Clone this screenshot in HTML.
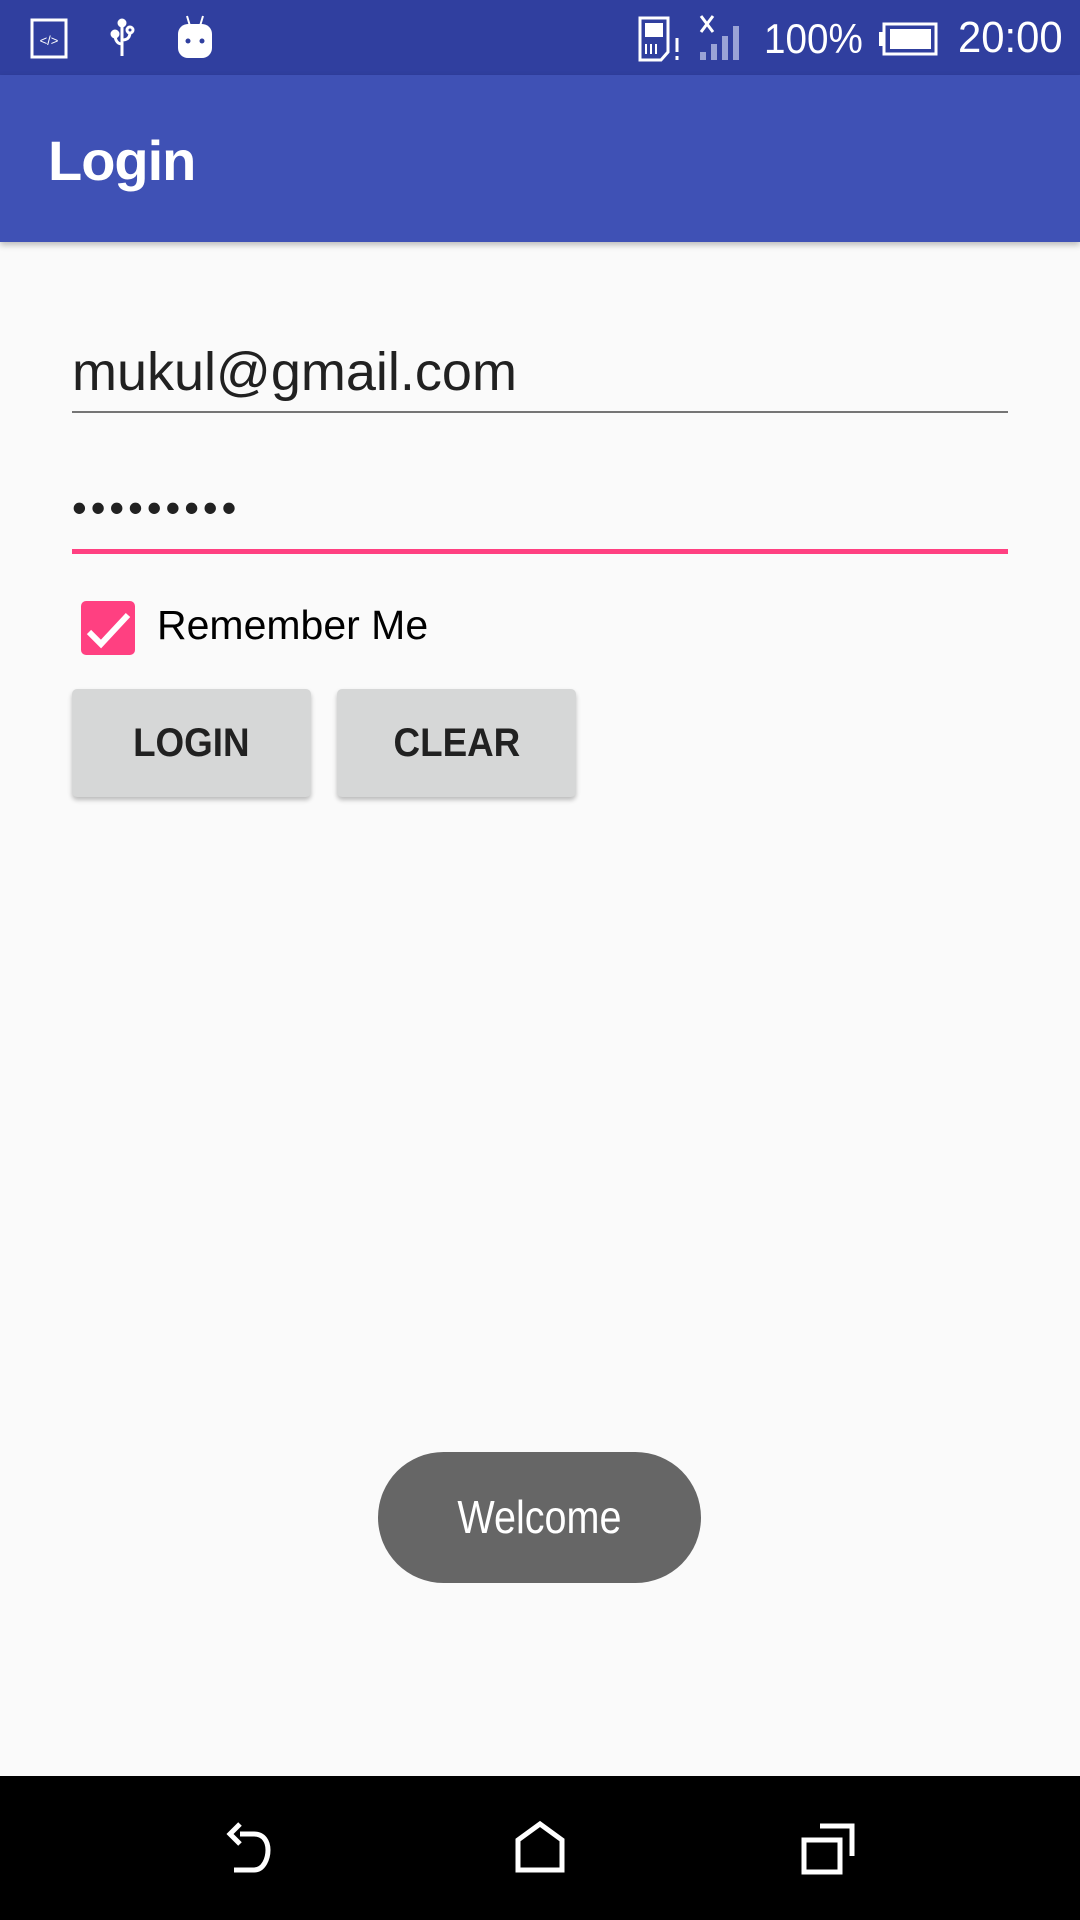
<!DOCTYPE html>
<html><head><meta charset="utf-8"><style>
*{margin:0;padding:0;box-sizing:border-box}
body{width:1080px;height:1920px;background:#FAFAFA;position:relative;overflow:hidden;font-family:"Liberation Sans",sans-serif}
.a{position:absolute}
</style></head><body>
<div class="a" style="left:0;top:0;width:1080px;height:75px;background:#303F9F"></div>
<div class="a" style="left:0;top:75px;width:1080px;height:167px;background:#3F51B5;box-shadow:0 3px 6px rgba(0,0,0,.25)"></div>
<svg class="a" style="left:30px;top:18px" width="40" height="42"><rect x="2" y="2" width="34" height="37" fill="none" stroke="#fff" stroke-width="3"/><text x="19" y="27" fill="#fff" font-size="13" text-anchor="middle" font-family="Liberation Sans">&lt;/&gt;</text></svg>
<svg class="a" style="left:105px;top:18px" width="36" height="42" fill="none" stroke="#fff" stroke-width="3"><path d="M17 4v34M17 26c-6 0-7-6-7-10M17 22c6 0 8-3 8-8"/><circle cx="17" cy="5" r="3" fill="#fff"/><circle cx="10" cy="16" r="3" fill="#fff"/><circle cx="25" cy="12" r="3"/></svg>
<svg class="a" style="left:175px;top:14px" width="40" height="46"><path d="M12 2l3 10M28 2l-3 10" stroke="#fff" stroke-width="2"/><rect x="3" y="10" width="34" height="34" rx="10" fill="#fff"/><circle cx="13" cy="27" r="2.5" fill="#303F9F"/><circle cx="27" cy="27" r="2.5" fill="#303F9F"/></svg>
<svg class="a" style="left:638px;top:16px" width="44" height="46"><path d="M2 2h28v34l-7 8H2z" fill="none" stroke="#fff" stroke-width="3"/><rect x="7" y="7" width="18" height="14" fill="#fff"/><path d="M8 28v10M13 28v10M18 28v10" stroke="#fff" stroke-width="2"/><path d="M39 22v14M39 40v4" stroke="#fff" stroke-width="3"/></svg>
<svg class="a" style="left:698px;top:14px" width="52" height="46"><path d="M3 2l12 16M15 2L3 18" stroke="#fff" stroke-width="3"/><g fill="#9aa3d6"><rect x="2" y="38" width="6" height="8"/><rect x="13" y="30" width="6" height="16"/><rect x="24" y="22" width="6" height="24"/><rect x="35" y="12" width="6" height="34"/></g></svg>
<div class="a" style="left:764px;top:14px;color:#fff;font-size:42px;line-height:50px;transform:scaleX(.92);transform-origin:left">100%</div>
<svg class="a" style="left:878px;top:22px" width="60" height="34"><rect x="6" y="2" width="52" height="30" fill="none" stroke="#fff" stroke-width="3"/><rect x="1" y="10" width="6" height="14" fill="#fff"/><rect x="12" y="7" width="41" height="20" fill="#fff"/></svg>
<div class="a" style="left:958px;top:12px;color:#fff;font-size:44px;line-height:52px;transform:scaleX(.95);transform-origin:left">20:00</div>
<div class="a" style="left:48px;top:126px;color:#fff;font-size:56px;line-height:70px;font-weight:bold;letter-spacing:-1px">Login</div>
<div class="a" style="left:72px;top:340px;color:#212121;font-size:54px;line-height:64px">mukul@gmail.com</div>
<div class="a" style="left:72px;top:411px;width:936px;height:2px;background:#757575"></div>
<div class="a" style="left:72px;top:480px;color:#212121;font-size:42px;line-height:56px;letter-spacing:4px">•••••••••</div>
<div class="a" style="left:72px;top:549px;width:936px;height:5px;background:#FF4081"></div>
<div class="a" style="left:81px;top:601px;width:54px;height:54px;background:#FF4081;border-radius:5px"></div>
<svg class="a" style="left:81px;top:601px" width="54" height="54"><path d="M8 31l12 12L47 14" fill="none" stroke="#fff" stroke-width="6"/></svg>
<div class="a" style="left:157px;top:600px;color:#000;font-size:41px;line-height:50px">Remember Me</div>
<div class="a" style="left:72px;top:689px;width:239px;height:108px;background:#D6D7D7;border-radius:5px;box-shadow:0 3px 5px rgba(0,0,0,.25);color:#212121;font-size:40px;font-weight:bold;text-align:center;line-height:108px"><span style="display:inline-block;transform:scaleX(.92)">LOGIN</span></div>
<div class="a" style="left:337px;top:689px;width:239px;height:108px;background:#D6D7D7;border-radius:5px;box-shadow:0 3px 5px rgba(0,0,0,.25);color:#212121;font-size:40px;font-weight:bold;text-align:center;line-height:108px"><span style="display:inline-block;transform:scaleX(.92)">CLEAR</span></div>
<div class="a" style="left:378px;top:1452px;width:323px;height:131px;background:#666;border-radius:66px;color:#fff;font-size:46px;text-align:center;line-height:131px"><span style="display:inline-block;transform:scaleX(.86)">Welcome</span></div>
<div class="a" style="left:0;top:1776px;width:1080px;height:144px;background:#000"></div>
<svg class="a" style="left:222px;top:1820px" width="64" height="56" fill="none" stroke="#fff" stroke-width="5"><path d="M18 14h14c10 0 14 8 14 16s-4 20-14 20H12"/><path d="M18 4L8 14l10 10" stroke-width="5"/></svg>
<svg class="a" style="left:514px;top:1820px" width="52" height="56" fill="none" stroke="#fff" stroke-width="5"><path d="M4 50V20L26 4l22 16v30z"/></svg>
<svg class="a" style="left:800px;top:1820px" width="58" height="56" fill="none" stroke="#fff" stroke-width="5"><rect x="4" y="20" width="36" height="32"/><path d="M20 6h32v30"/></svg>
</body></html>
